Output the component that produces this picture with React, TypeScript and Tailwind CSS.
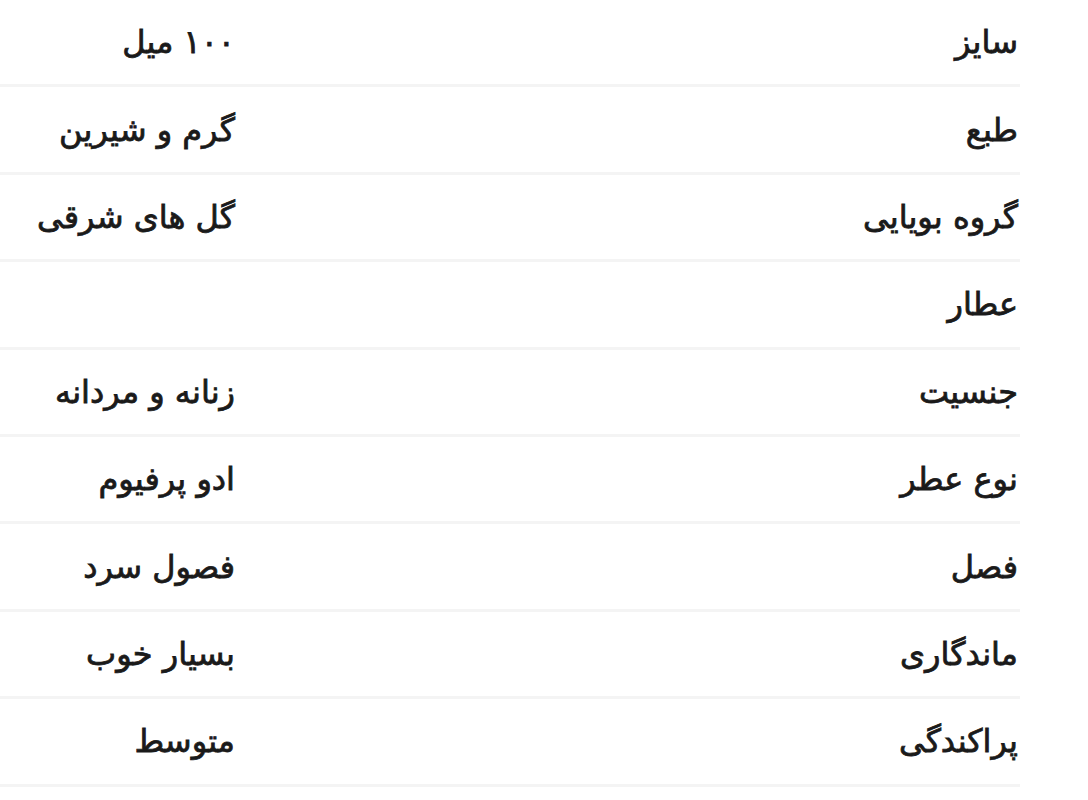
const specs: { label: string; value: string }[] = [
  { label: "سایز", value: "۱۰۰ میل" },
  { label: "طبع", value: "گرم و شیرین" },
  { label: "گروه بویایی", value: "گل های شرقی" },
  { label: "عطار", value: "" },
  { label: "جنسیت", value: "زنانه و مردانه" },
  { label: "نوع عطر", value: "ادو پرفیوم" },
  { label: "فصل", value: "فصول سرد" },
  { label: "ماندگاری", value: "بسیار خوب" },
  { label: "پراکندگی", value: "متوسط" },
];

export default function App() {
  return (
    <div
      className="w-[1088px] h-[800px] bg-white overflow-hidden"
      style={{ fontFamily: '"DejaVu Sans", "Noto Sans", sans-serif' }}
    >
      <ul dir="rtl" className="w-[1020px]">
        {specs.map((spec) => (
          <li
            key={spec.label}
            className="flex items-center h-[87.4px] border-b-[3px] border-[#f4f4f4] text-[32px] font-normal text-[#1a1a1a] [-webkit-text-stroke:0.8px_#1a1a1a]"
          >
            <span className="w-[785px] pr-[2px] shrink-0">{spec.label}</span>
            <span>{spec.value}</span>
          </li>
        ))}
      </ul>
    </div>
  );
}
